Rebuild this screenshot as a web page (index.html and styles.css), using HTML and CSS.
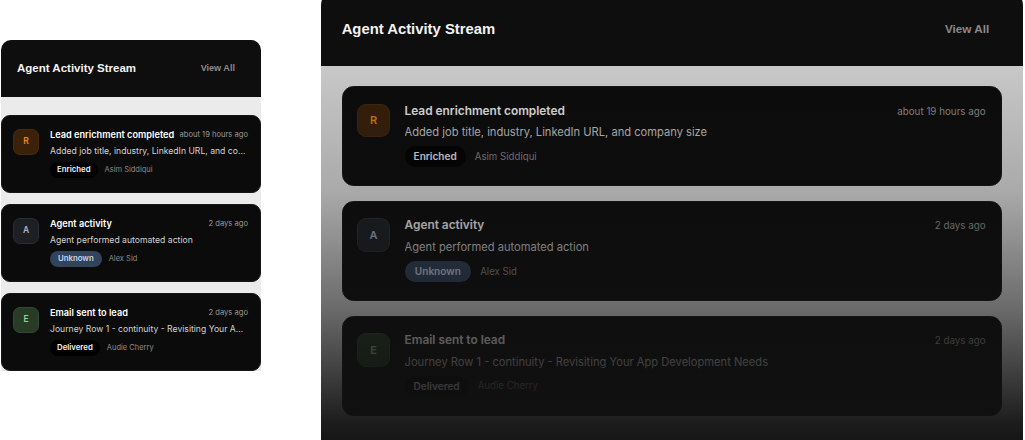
FILE: index.html
```html
<!DOCTYPE html>
<html lang="en">
<head>
<meta charset="utf-8">
<title>Agent Activity Stream</title>
<link rel="stylesheet" href="styles.css">
</head>
<body>
<div class="canvas">
  <section class="stream compact">
    <header class="stream-head">
      <h2 class="stream-title">Agent Activity Stream</h2>
      <a class="view-all">View All</a>
    </header>
    <div class="stream-body">
      <article class="item">
        <div class="avatar av-orange">R</div>
        <div class="item-main">
          <div class="item-top"><span class="item-title">Lead enrichment completed</span><span class="item-time">about 19 hours ago</span></div>
          <p class="item-desc">Added job title, industry, LinkedIn URL, and company size</p>
          <div class="item-meta"><span class="badge badge-dark">Enriched</span><span class="item-who">Asim Siddiqui</span></div>
        </div>
      </article>
      <article class="item">
        <div class="avatar av-slate">A</div>
        <div class="item-main">
          <div class="item-top"><span class="item-title">Agent activity</span><span class="item-time">2 days ago</span></div>
          <p class="item-desc">Agent performed automated action</p>
          <div class="item-meta"><span class="badge badge-slate">Unknown</span><span class="item-who">Alex Sid</span></div>
        </div>
      </article>
      <article class="item">
        <div class="avatar av-green">E</div>
        <div class="item-main">
          <div class="item-top"><span class="item-title">Email sent to lead</span><span class="item-time">2 days ago</span></div>
          <p class="item-desc">Journey Row 1 - continuity - Revisiting Your App Development Needs</p>
          <div class="item-meta"><span class="badge badge-dark">Delivered</span><span class="item-who">Audie Cherry</span></div>
        </div>
      </article>
    </div>
  </section>

  <section class="stream big">
    <header class="stream-head">
      <h2 class="stream-title">Agent Activity Stream</h2>
      <a class="view-all">View All</a>
    </header>
    <div class="stream-body">
      <article class="item">
        <div class="avatar av-orange">R</div>
        <div class="item-main">
          <div class="item-top"><span class="item-title">Lead enrichment completed</span><span class="item-time">about 19 hours ago</span></div>
          <p class="item-desc">Added job title, industry, LinkedIn URL, and company size</p>
          <div class="item-meta"><span class="badge badge-dark">Enriched</span><span class="item-who">Asim Siddiqui</span></div>
        </div>
      </article>
      <article class="item">
        <div class="avatar av-slate">A</div>
        <div class="item-main">
          <div class="item-top"><span class="item-title">Agent activity</span><span class="item-time">2 days ago</span></div>
          <p class="item-desc">Agent performed automated action</p>
          <div class="item-meta"><span class="badge badge-slate">Unknown</span><span class="item-who">Alex Sid</span></div>
        </div>
      </article>
      <article class="item">
        <div class="avatar av-green">E</div>
        <div class="item-main">
          <div class="item-top"><span class="item-title">Email sent to lead</span><span class="item-time">2 days ago</span></div>
          <p class="item-desc">Journey Row 1 - continuity - Revisiting Your App Development Needs</p>
          <div class="item-meta"><span class="badge badge-dark">Delivered</span><span class="item-who">Audie Cherry</span></div>
        </div>
      </article>
    </div>
  </section>
</div>
</body>
</html>
```

FILE: styles.css
```css
* { box-sizing: border-box; margin: 0; padding: 0; }

html, body {
  background: #ffffff;
}

body {
  font-family: Inter, "Liberation Sans", sans-serif;
  height: 440px;
  overflow: hidden;
}

.canvas {
  display: flex;
  align-items: flex-start;
  gap: 60px;
  padding-left: 1px;
  height: 440px;
  overflow: hidden;
}

.stream {
  flex: none;
  width: 260px;
  border-radius: 10px 10px 0 0;
  overflow: hidden;
}

.compact {
  margin-top: 40px;
}

.big {
  width: 544px;
  zoom: 1.29;
  margin-top: -6px;
}

.stream-head {
  height: 57px;
  background: #0e0e0e;
  display: flex;
  align-items: center;
  justify-content: space-between;
  padding: 0 16px;
}

.stream-title {
  font: 700 11.5px/1 "Liberation Sans", Arial, sans-serif;
  color: #f2f2f2;
}

.view-all {
  font: 700 9.1px/1 "Liberation Sans", Arial, sans-serif;
  color: #8a8a8a;
  padding: 4px 10px;
}

.stream-body {
  background: #ebebeb;
  display: flex;
  flex-direction: column;
  gap: 11px;
}

.compact .stream-body {
  padding: 18px 0 0;
}

.big .stream-body {
  position: relative;
  padding: 16px 16px 30px;
  gap: 11.6px;
}

.big .stream-body::after {
  content: "";
  position: absolute;
  inset: 0;
  pointer-events: none;
  background: linear-gradient(to bottom,
    rgba(17, 17, 17, 0.16) 0px,
    rgba(17, 17, 17, 0.30) 98px,
    rgba(17, 17, 17, 0.59) 188px,
    rgba(17, 17, 17, 0.95) 277px,
    rgba(17, 17, 17, 1) 300px);
}

.item {
  display: flex;
  gap: 11px;
  background: #0b0b0b;
  border: 1px solid #161616;
  border-radius: 9px;
  padding: 12.5px 12px 14.5px 11px;
}

.avatar {
  flex: none;
  width: 26px;
  height: 26px;
  border-radius: 7px;
  display: flex;
  align-items: center;
  justify-content: center;
  font: 600 8.5px/1 Inter, sans-serif;
  border: 1px solid transparent;
}

.av-orange { background: #3b2109; border-color: #4a2a0e; color: #ec8a10; }
.av-slate { background: #1d1f25; border-color: #2a2d34; color: #a9b5cc; }
.av-green { background: #283b27; border-color: #324a31; color: #93d48d; }

.item-main {
  flex: 1;
  min-width: 0;
}

.item-top {
  display: flex;
  justify-content: space-between;
  align-items: center;
  gap: 4px;
  height: 12px;
}

.item-title {
  flex: none;
  font: 600 9.2px/12px Inter, sans-serif;
  color: #ffffff;
}

.item-time {
  font: 400 7.6px/12px Inter, sans-serif;
  color: #9a9a9a;
  white-space: nowrap;
}

.item-desc {
  margin-top: 4.5px;
  font: 400 8.65px/12px Inter, sans-serif;
  color: #d2d2d2;
  white-space: nowrap;
  overflow: hidden;
  text-overflow: ellipsis;
}

.item-meta {
  margin-top: 4.5px;
  display: flex;
  align-items: center;
  gap: 7px;
}

.badge {
  height: 16px;
  border-radius: 8px;
  padding: 0 7px;
  display: flex;
  align-items: center;
  font: 600 7.8px/1 Inter, sans-serif;
}

.badge-dark { background: #000000; color: #f2f2f2; }
.badge-slate { background: #31445c; color: #c9d6e8; padding: 0 8px; }

.item-who {
  font: 400 7.5px/1 Inter, sans-serif;
  color: #8c8c8c;
}
```
